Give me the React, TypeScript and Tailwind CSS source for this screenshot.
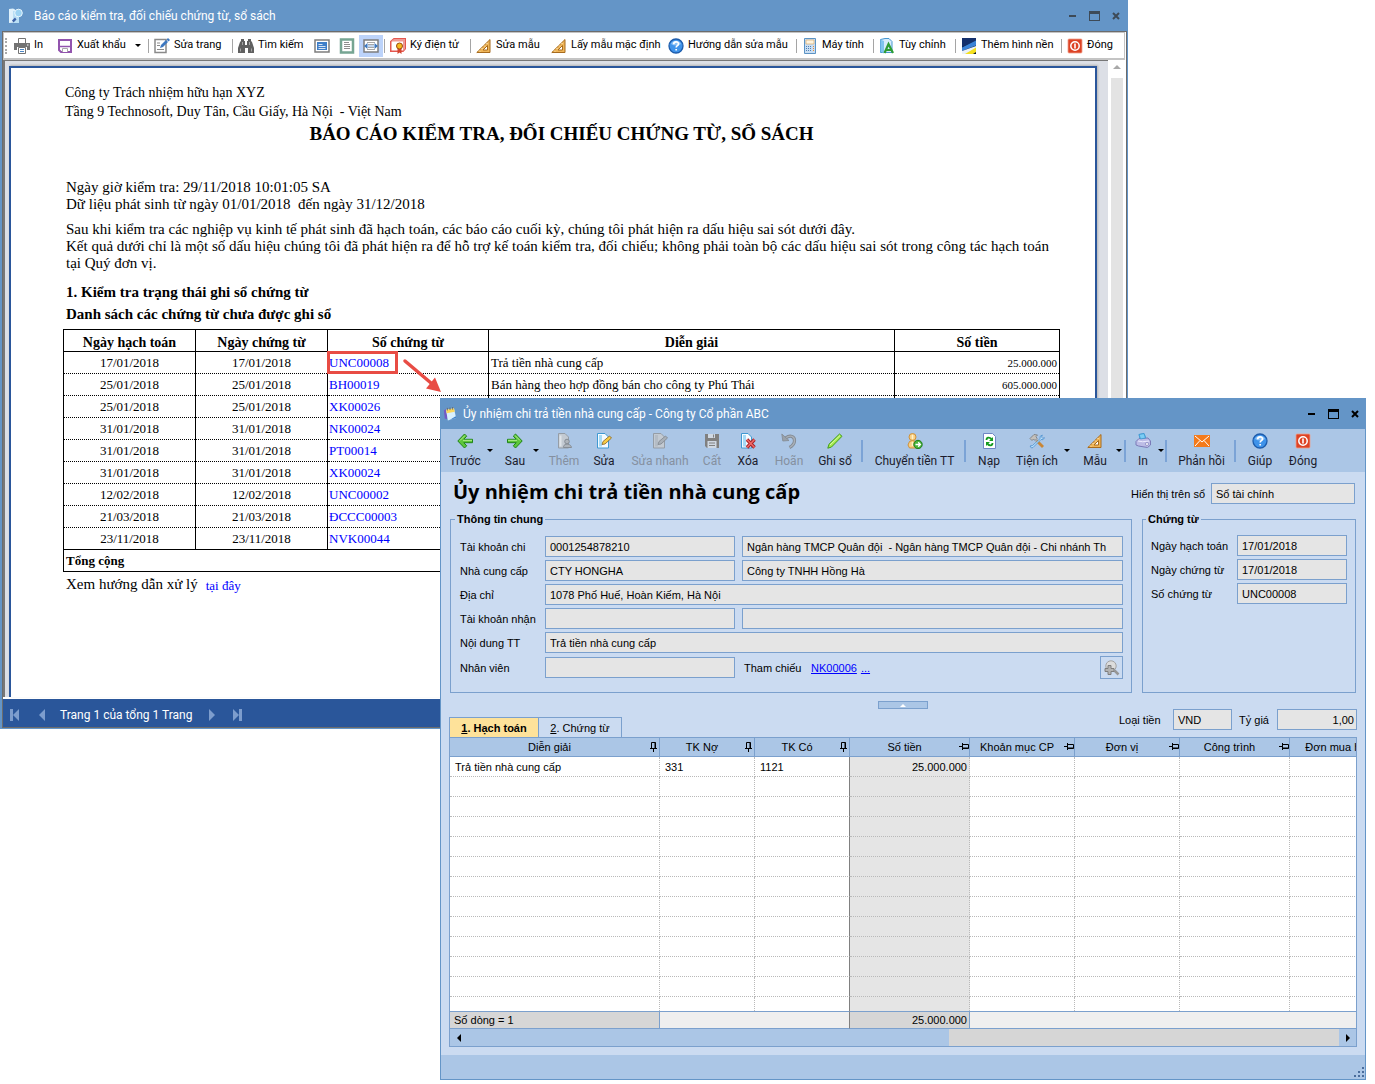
import type {ReactNode} from "react";

type IconProps = {
    children: ReactNode;
    className?: string;
}

function Icon({children, className = "h-4 w-4"}: IconProps) {
    return (
        <svg viewBox="0 0 16 16" className={`shrink-0 ${className}`} fill="none" aria-hidden="true">
            {children}
        </svg>
    )
}

const PrinterIcon = () => (
    <Icon>
        <path d="M4.500 5V.5h7V5" fill="#fff" stroke="#737373" />
        <path d="M0 5h16v7h-3V9H3v3H0z" fill="#737373" />
        <path d="M4.500 9.500h7v6h-7z" fill="#fff" stroke="#737373" />
        <path d="M6 11.500h4M6 13.500h4" stroke="#4a86c5" />
        <path d="M13 7h1.500" stroke="#fff" />
    </Icon>
)

const SaveIcon = () => (
    <Icon>
        <path d="M2 2h12v12H4l-2-2z" fill="#fff" stroke="#9254ae" strokeWidth="2" />
        <path d="M2 8.500h12" stroke="#9254ae" strokeWidth="1.500" />
        <path d="M5.500 14v-3.500h5V14" fill="#fff" stroke="#a9a9a9" />
    </Icon>
)

const EditPageIcon = () => (
    <Icon>
        <path d="M1 1.500h11v13H1z" fill="#fff" stroke="#8a8a8a" strokeWidth="1.500" />
        <path d="M3 5h3M3 7.500h3M3 11.500h7" stroke="#8a8a8a" />
        <path d="M6 10l1-3 5-5 2 2-5 5z" fill="#3d78c0" />
        <path d="M12.500 1.500L14 0l2 2-1.500 1.500z" fill="#3d78c0" />
    </Icon>
)

const BinocularsIcon = () => (
    <Icon>
        <path d="M3 1h3v2h1v4h2V3h1V1h3v2l1 1 2 6v5h-6v-5H7v5H0v-5l2-6 1-1z" fill="#606060" />
        <path d="M2.500 10.500v3M13.500 10.500v3M4.500 4v3M11.500 4v3" stroke="#a5a5a5" />
    </Icon>
)

const WholePageIcon = () => (
    <Icon>
        <path d="M1 2h14v12H1z" fill="#fff" stroke="#7d7d7d" strokeWidth="1.500" />
        <path d="M3 4h10v8H3z" fill="#3f7fc9" />
        <path d="M4.500 6.500h4M4.500 8.500h7M4.500 10.500h7" stroke="#fff" strokeWidth=".8" />
    </Icon>
)

const OnePageIcon = () => (
    <Icon>
        <path d="M2 1.500h12v13H2z" fill="#fff" stroke="#76a593" strokeWidth="2.500" />
        <path d="M5 4.500h5M5 6.500h6M5 8.500h6M5 10.500h6" stroke="#8d8d8d" />
    </Icon>
)

const PageWidthIcon = () => (
    <Icon>
        <path d="M1 2h14v12H1z" fill="#fff" stroke="#7d7d7d" strokeWidth="1.500" />
        <path d="M4 4.500h8M4 11.500h8" stroke="#a8a8a8" />
        <path d="M1 8l3.500-3v6zM15 8l-3.500-3v6z" fill="#3d78c0" />
        <path d="M5 6.500h6M5 9.500h6" stroke="#a8a8a8" />
        <path d="M4 8h8" stroke="#8aaedb" />
    </Icon>
)

const SignIcon = () => (
    <Icon>
        <path d="M.75 3.500L4 .75h11.250v10L13 13.250H.75z" fill="#fff" stroke="#e4574f" strokeWidth="1.500" />
        <path d="M1 3.500L4 1h11v10l-2 2V3.500z" fill="#ef9a94" />
        <path d="M7.500 10h4v6l-2-1.500-2 1.500z" fill="#d4432f" />
        <circle cx="9.500" cy="8" r="3" fill="#f5b91c" stroke="#9a4b12" />
    </Icon>
)

const RulerIcon = () => (
    <Icon>
        <path d="M14 1.500v13H.8z" fill="#efb558" stroke="#a76b1e" />
        <path d="M11.500 7.500v4.500H7z" fill="#fff" stroke="#a76b1e" />
        <path d="M3 12.500l1 1M5.500 10l1 1M8 7.500l1 1M10.500 5l1 1" stroke="#fff3cf" />
    </Icon>
)

const HelpIcon = () => (
    <Icon>
        <circle cx="8" cy="8" r="7" fill="#3f93ea" stroke="#1d5cac" strokeWidth="1.300" />
        <path d="M3 6a5.500 5.500 0 0 1 10 0q-5 3-10 0z" fill="#8cc2f7" />
        <path d="M5.700 6.200c0-3 4.800-3 4.800-.3 0 1.700-2.300 1.700-2.300 3.500M8.200 11v1.600" stroke="#fff" strokeWidth="1.700" />
    </Icon>
)

const CalculatorIcon = () => (
    <Icon>
        <path d="M2.500.5h11v15h-11z" fill="#c9def3" stroke="#5b93c4" />
        <path d="M4 2h8v4H4z" fill="#fff4df" stroke="#d5a96b" strokeWidth=".7" />
        <path d="M4 8.500h6M4 10.500h6M4 12.500h6" stroke="#4e80b5" strokeDasharray="1 1" />
        <path d="M11.500 8v6" stroke="#ef8b2f" strokeDasharray="1 1" />
    </Icon>
)

const CustomizeIcon = () => (
    <Icon>
        <path d="M1.500 1.500L6 .5h4l3 3v11h-11.500z" fill="#d6ebfb" stroke="#4697d0" />
        <path d="M1.500 1.500L5 3v12.500l-3.500-2z" fill="#7fc4ee" />
        <path d="M5.500 15l4-9 4.500 9M7.500 12h5" stroke="#2d9c34" strokeWidth="2.200" />
    </Icon>
)

const WallpaperIcon = () => (
    <Icon>
        <path d="M1 0h14v16H1z" fill="#0c1830" />
        <path d="M1 0h14v3L1 9z" fill="#14306c" />
        <path d="M15 2.500v5L1 13V9.500z" fill="#3b83d8" />
        <path d="M1 13l14-5v3.500L8 16H1z" fill="#e9f1fb" />
        <path d="M15 9.500V14l-3 2H4z" fill="#f4e01f" />
    </Icon>
)

const PowerIcon = () => (
    <Icon>
        <rect x="1" y="1" width="14" height="14" rx="1" fill="#dd4325" stroke="#f0a08c" strokeWidth=".8" />
        <circle cx="8" cy="8" r="4.200" stroke="#fff" strokeWidth="1.500" />
        <path d="M8 5.500v5" stroke="#fff" strokeWidth="1.600" />
    </Icon>
)

const ArrowIcon = ({flip}: {flip?: boolean}) => (
    <Icon className={flip ? "h-4 w-4 -scale-x-100" : "h-4 w-4"}>
        <path d="M7.500 1L.8 8l6.700 7 2.200-2.200L6.800 9.700h8.700V6.300H6.800l2.900-3.100z" fill="#5ec63a" stroke="#1f8418" />
        <path d="M3 7.500l5-5M6 7.300h9" stroke="#b6ee92" />
    </Icon>
)

const AddIcon = () => (
    <Icon>
        <path d="M2.500.5H9l3.500 3.500v11h-10z" fill="#c3cad2" stroke="#959da6" />
        <path d="M4.500 2.500v11" stroke="#dfe4e9" strokeWidth="2" />
        <circle cx="11" cy="8.500" r="2.300" fill="#aeb4bb" stroke="#868d95" />
        <path d="M7.500 14.500c-.5-4.500 7.500-4.500 8 0z" fill="#aeb4bb" stroke="#868d95" />
    </Icon>
)

const EditIcon = ({muted}: {muted?: boolean}) => (
    <Icon>
        <path d="M1.500.5H9l3.500 3.500v11h-11z" fill={muted ? "#c3cad2" : "#f4faff"} stroke={muted ? "#959da6" : "#3f99d2"} />
        <path d="M3 2h3v11.500H3z" fill={muted ? "#b4bcc5" : "#a7dbf6"} />
        <path d="M6 11.500l1-3L13.500 3l2 2L9 11z" fill={muted ? "#a9b0b8" : "#f8cc42"} stroke={muted ? "#848b93" : "#8b6c31"} strokeWidth=".9" />
    </Icon>
)

const FloppyIcon = () => (
    <Icon>
        <path d="M1 1h14v14H3l-2-2z" fill="#808080" />
        <path d="M4 1h7v4H4zM3.500 8h9v7h-9z" fill="#cfd8e3" />
        <path d="M9.500 1.500v3M5 10h6M5 12.500h6" stroke="#808080" />
    </Icon>
)

const DeleteIcon = () => (
    <Icon>
        <path d="M1.500.5H8l3.500 3.500v11h-10z" fill="#f4faff" stroke="#3f99d2" />
        <path d="M3 2h3v11.500H3z" fill="#a7dbf6" />
        <path d="M7 6.500l7.500 8M14.500 6.500l-7.500 8" stroke="#a72125" strokeWidth="3.400" />
        <path d="M7 6.500l7.500 8M14.500 6.500l-7.500 8" stroke="#ef6b69" strokeWidth="1.500" />
    </Icon>
)

const UndoIcon = () => (
    <Icon>
        <path d="M4.500 5c5-3.500 9-1.500 9 2.500 0 3-1.500 5.200-5 7" stroke="#838a92" strokeWidth="3.200" />
        <path d="M4.500 5c5-3.500 9-1.500 9 2.500 0 3-1.500 5.200-5 7" stroke="#a9b0b9" strokeWidth="1.400" />
        <path d="M.8 1l1 7 6.200-.5z" fill="#9aa1aa" stroke="#838a92" strokeWidth=".8" />
    </Icon>
)

const MarkerIcon = () => (
    <Icon>
        <path d="M.8 15.200l1.200-4L12.500 1l2.500 2.300L4.500 14z" fill="#a5ea4c" stroke="#419c1c" />
        <path d="M3 12L13 2.500" stroke="#dbfba9" />
    </Icon>
)

const TransferIcon = () => (
    <Icon>
        <circle cx="5.500" cy="4" r="3.500" fill="#f9d084" stroke="#cf9138" />
        <path d="M2.500 8.500q3-2 6 0l2 3-2 3.500h-6l-1.500-3z" fill="#f9d084" stroke="#cf9138" />
        <path d="M5.500 2v4M5.500 9v4" stroke="#fff1cc" strokeWidth="1.500" />
        <circle cx="11" cy="11.500" r="4.200" fill="#49b53a" stroke="#1d7a1b" />
        <path d="M8.500 11.500h4.500M11.200 9.300l2.200 2.200-2.200 2.200" stroke="#fff" strokeWidth="1.300" />
    </Icon>
)

const ReloadIcon = () => (
    <Icon>
        <path d="M2.500.5h9l3 3v12h-12z" fill="#fff" stroke="#6f86c5" />
        <path d="M12 4v4H8zM5 13V9h4z" fill="#159a1f" />
        <path d="M5.500 7c0-3 3-3 5-1M11.500 10c0 3-3 3-5 1" stroke="#159a1f" strokeWidth="1.800" />
    </Icon>
)

const ToolsIcon = () => (
    <Icon>
        <path d="M7.500 7.500l6.500 6.500" stroke="#c98636" strokeWidth="2.800" />
        <path d="M1 5.500L5 1.500l3.500.5-1.500 1.500 1 2-2 2-1.500-1.500-1.500 1.500z" fill="#c4c0bb" stroke="#777" strokeWidth=".8" />
        <path d="M1 13l1.500 2 1.500-.5L12 6.500l2 .2 1.500-2-1.800.5-1.200-1 .8-2.200-2.300 1.500.2 2L3.500 12.500z" fill="#b9dffb" stroke="#4d8fcd" strokeWidth=".8" />
    </Icon>
)

const PrintColorIcon = () => (
    <Icon>
        <path d="M4 1.500l5-1 2 5-5.500 2z" fill="#7ccdf4" stroke="#3b96cf" strokeWidth=".8" />
        <path d="M1 8.500l3-3 9-.5 2.500 3v4l-3 2.500-9-1.500L1 12z" fill="#bcbce6" stroke="#7b7bb8" />
        <path d="M3 8q4 1.500 11 0" stroke="#ececff" />
        <path d="M4 1.500l5-1 1.500 4.500-5 1z" fill="#7ccdf4" stroke="#3b96cf" strokeWidth=".8" />
        <circle cx="12" cy="11" r="1.500" fill="#fff" stroke="#7b7bb8" strokeWidth=".7" />
    </Icon>
)

const MailIcon = () => (
    <Icon>
        <path d="M0 2h16v12H0z" fill="#f47a1b" />
        <path d="M1 3l7 6 7-6M1 13l5-5.500M15 13l-5-5.500" stroke="#fff" />
    </Icon>
)

const ZoomIcon = () => (
    <Icon>
        <path d="M10.500 10.500l4 4" stroke="#979797" strokeWidth="2.500" />
        <circle cx="7" cy="6" r="5.200" fill="#dcdcdc" stroke="#a3a3a3" />
        <path d="M4 5.500h3v3h3v3H7v3H4v-3H1v-3h3z" fill="#b3b3b3" stroke="#7e7e7e" />
    </Icon>
)

const ReportIcon = () => (
    <Icon>
        <path d="M1 1l4-.5 2 1v13L1 15z" fill="#dff1fb" />
        <path d="M5 3h6v12H5z" fill="#b9dff5" />
        <circle cx="10.500" cy="5" r="3.800" fill="#9dd3f2" stroke="#e8f6fd" />
        <path d="M4 12.500l3-3 1.500 2-3 3z" fill="#3e63a8" />
    </Icon>
)

const VoucherIcon = () => (
    <Icon className="h-[14px] w-[14px]">
        <path d="M1 4l3-2 1 12-3-1z" fill="#7259c5" />
        <path d="M3.500 3l9-1.500 2.500 11-9.500 3z" fill="#d9f0fd" />
        <path d="M3.500 3l9-1.500 1 4-9.300 1.500z" fill="#fbd75c" />
        <path d="M5 1v3M8 .5v3M11 0v3" stroke="#666" />
        <path d="M8 14.500l6.500-4 .5 2-9.500 3z" fill="#3c7fcb" />
    </Icon>
)

function WindowButtons({tone}: {tone: string}) {
    return (
        <div className={`flex items-center gap-3 ${tone}`}>
            <button type="button" aria-label="Thu nhỏ" className="flex h-3 w-2 items-center">
                <span className="h-[2px] w-[7px] bg-current" />
            </button>
            <button type="button" aria-label="Phóng to" className="h-[10px] w-[11px] border border-t-[3px] border-current" />
            <button type="button" aria-label="Đóng cửa sổ" className="flex w-2 justify-center">
                <svg viewBox="0 0 8 8" className="h-2 w-2 shrink-0"><path d="M1 1l6 6M7 1L1 7" stroke="currentColor" strokeWidth="2" /></svg>
            </button>
        </div>
    )
}

type ReportTool = {
    icon: ReactNode;
    label: string;
    width: string;
    menu?: boolean;
    iconOnly?: boolean;
    active?: boolean;
    endsGroup?: boolean;
}

const reportTools: ReportTool[] = [
    {icon: <PrinterIcon />, label: "In", width: "w-[43px]"},
    {icon: <SaveIcon />, label: "Xuất khẩu", width: "w-[90px]", menu: true, endsGroup: true},
    {icon: <EditPageIcon />, label: "Sửa trang", width: "w-[77px]", endsGroup: true},
    {icon: <BinocularsIcon />, label: "Tìm kiếm", width: "w-[71px]"},
    {icon: <WholePageIcon />, label: "Cả trang", width: "w-[25px]", iconOnly: true},
    {icon: <OnePageIcon />, label: "Một trang", width: "w-[25px]", iconOnly: true},
    {icon: <PageWidthIcon />, label: "Vừa chiều rộng", width: "w-[24px]", iconOnly: true, active: true, endsGroup: true},
    {icon: <SignIcon />, label: "Ký điện tử", width: "w-[79px]", endsGroup: true},
    {icon: <RulerIcon />, label: "Sửa mẫu", width: "w-[75px]"},
    {icon: <RulerIcon />, label: "Lấy mẫu mặc định", width: "w-[117px]"},
    {icon: <HelpIcon />, label: "Hướng dẫn sửa mẫu", width: "w-[127px]", endsGroup: true},
    {icon: <CalculatorIcon />, label: "Máy tính", width: "w-[70px]", endsGroup: true},
    {icon: <CustomizeIcon />, label: "Tùy chỉnh", width: "w-[75px]", endsGroup: true},
    {icon: <WallpaperIcon />, label: "Thêm hình nền", width: "w-[99px]", endsGroup: true},
    {icon: <PowerIcon />, label: "Đóng", width: "w-[50px]"},
]

function ReportToolbar() {
    return (
        <div className="flex h-[28px] items-center border border-[#c4c4c4] border-b-2 bg-white font-['Roboto',sans-serif] text-[11px] text-black">
            <span className="ml-px mr-[7px] h-4 border-l-2 border-dotted border-[#a9a9a9]" />
            {reportTools.map((tool) => (
                <div key={tool.label} className="flex items-center">
                    <button
                        type="button"
                        aria-label={tool.label}
                        className={`flex h-[22px] items-center gap-1 whitespace-nowrap ${tool.width} ${tool.iconOnly ? "justify-center" : ""} ${tool.active ? "bg-[#bcd3fa]" : ""}`}
                    >
                        {tool.icon}
                        {!tool.iconOnly && tool.label}
                        {tool.menu && <span className="ml-auto mr-[6px] border-x-[3px] border-t-[3px] border-x-transparent border-t-black" />}
                    </button>
                    {tool.endsGroup && <span className="mr-[5px] ml-px h-[14px] w-px bg-[#a5a5a5]" />}
                </div>
            ))}
        </div>
    )
}

type ReportRow = {
    posted: string;
    dated: string;
    code: string;
    note?: string;
    amount?: string;
}

const reportRows: ReportRow[] = [
    {posted: "17/01/2018", dated: "17/01/2018", code: "UNC00008", note: "Trả tiền nhà cung cấp", amount: "25.000.000"},
    {posted: "25/01/2018", dated: "25/01/2018", code: "BH00019", note: "Bán hàng theo hợp đồng bán cho công ty Phú Thái", amount: "605.000.000"},
    {posted: "25/01/2018", dated: "25/01/2018", code: "XK00026"},
    {posted: "31/01/2018", dated: "31/01/2018", code: "NK00024"},
    {posted: "31/01/2018", dated: "31/01/2018", code: "PT00014"},
    {posted: "31/01/2018", dated: "31/01/2018", code: "XK00024"},
    {posted: "12/02/2018", dated: "12/02/2018", code: "UNC00002"},
    {posted: "21/03/2018", dated: "21/03/2018", code: "ĐCCC00003"},
    {posted: "23/11/2018", dated: "23/11/2018", code: "NVK00044"},
]

function ReportTable() {
    return (
        <table className="mt-1 w-full table-fixed border-collapse border border-black text-[13px] leading-[18px]">
            <colgroup>
                <col className="w-[132px]" />
                <col className="w-[132px]" />
                <col className="w-[161px]" />
                <col />
                <col className="w-[165px]" />
            </colgroup>
            <thead>
                <tr className="h-[22px] text-[14px]">
                    {["Ngày hạch toán", "Ngày chứng từ", "Số chứng từ", "Diễn giải", "Số tiền"].map((title) => (
                        <th key={title} className="border border-black p-0 pt-1 leading-[17px]">{title}</th>
                    ))}
                </tr>
            </thead>
            <tbody>
                {reportRows.map((row, index) => (
                    <tr key={row.code} className="h-[22px] border-b border-dotted border-black">
                        <td className="border-x border-x-black p-0 text-center">{row.posted}</td>
                        <td className="border-x border-x-black p-0 text-center">{row.dated}</td>
                        <td className="relative border-x border-x-black p-0 pl-px">
                            <a href={`#${row.code}`} className="text-[#0000ff]">{row.code}</a>
                            {index === 0 && <CalloutArrow />}
                        </td>
                        <td className="border-x border-x-black p-0 pl-[2px]">{row.note}</td>
                        <td className="border-x border-x-black p-0 pr-[2px] text-right text-[11px]">{row.amount}</td>
                    </tr>
                ))}
            </tbody>
            <tfoot>
                <tr className="h-[22px]">
                    <td colSpan={5} className="border border-black p-0 pl-[2px] font-bold">Tổng cộng</td>
                </tr>
            </tfoot>
        </table>
    )
}

// red frame round the voucher number, with an arrow to the voucher window
function CalloutArrow() {
    return (
        <>
            <span className="absolute -top-px -left-px h-[23px] w-[71px] border-[3px] border-[#e84c44]" />
            <svg viewBox="0 0 40 36" className="absolute top-[6px] left-[74px] h-9 w-10" fill="none" aria-hidden="true">
                <path d="M3 3l26 22" stroke="#e84c44" strokeWidth="3.500" strokeLinecap="round" />
                <path d="M39 34l-15-3.500 9-11z" fill="#e84c44" />
            </svg>
        </>
    )
}

function ReportPage() {
    return (
        <article className="min-w-0 flex-1 border-x-2 border-t-2 border-[#2a569b] bg-white pt-[15px] pr-[35px] pb-[102px] pl-[52px] font-['Liberation_Serif',serif] text-black shadow-[1px_-1px_2px_#b5b5b5]">
            <p className="pl-[2px] text-[14px] leading-[19px]">Công ty Trách nhiệm hữu hạn XYZ</p>
            <p className="pl-[2px] text-[14px] leading-[19px]">Tầng 9 Technosoft, Duy Tân, Cầu Giấy, Hà Nội&nbsp; - Việt Nam</p>
            <h1 className="mt-px text-center text-[19px] leading-6 font-bold">BÁO CÁO KIỂM TRA, ĐỐI CHIẾU CHỨNG TỪ, SỔ SÁCH</h1>
            <p className="mt-[33px] pl-[3px] text-[15px] leading-[17px]">
                Ngày giờ kiểm tra: 29/11/2018 10:01:05 SA<br />
                Dữ liệu phát sinh từ ngày 01/01/2018&nbsp; đến ngày 31/12/2018
            </p>
            <p className="mt-2 pl-[3px] text-[15px] leading-[17px]">
                Sau khi kiểm tra các nghiệp vụ kinh tế phát sinh đã hạch toán, các báo cáo cuối kỳ, chúng tôi phát hiện ra dấu hiệu sai sót dưới đây.<br />
                Kết quả dưới chỉ là một số dấu hiệu chúng tôi đã phát hiện ra để hỗ trợ kế toán kiểm tra, đối chiếu; không phải toàn bộ các dấu hiệu sai sót trong công tác hạch toán<br />
                tại Quý đơn vị.
            </p>
            <h2 className="mt-[9px] pl-[3px] text-[15px] leading-[22px] font-bold">1. Kiểm tra trạng thái ghi sổ chứng từ</h2>
            <h3 className="pl-[3px] text-[15px] leading-[22px] font-bold">Danh sách các chứng từ chưa được ghi sổ</h3>
            <ReportTable />
            <p className="mt-px flex items-center gap-2 pl-[3px] text-[15px] leading-[22px]">
                Xem hướng dẫn xử lý
                <a href="#huong-dan" className="pt-1 text-[13px] leading-[18px] text-[#0000ff]">tại đây</a>
            </p>
        </article>
    )
}

function PagerArrow({label, flip, bar}: {label: string, flip?: boolean, bar?: boolean}) {
    return (
        <button type="button" aria-label={label}>
            <svg viewBox="0 0 10 12" className={flip ? "h-3 w-[10px] -scale-x-100" : "h-3 w-[10px]"} fill="#7d9dcd">
                <path d="M9 0v12L3 6z" />
                {bar && <path d="M0 0h3v12H0z" />}
            </svg>
        </button>
    )
}

function ReportWindow() {
    return (
        <section className="mr-[247px] border-r border-b border-l-2 border-[#6495c7] bg-[#6495c7]">
            <header className="flex h-[31px] items-center justify-between pr-[7px] pl-[6px] font-['Roboto',sans-serif] text-[12px] text-white">
                <span className="flex items-center gap-[10px]"><ReportIcon />Báo cáo kiểm tra, đối chiếu chứng từ, sổ sách</span>
                <WindowButtons tone="text-[#3d4a57]" />
            </header>
            <div className="border border-[#6c6c6c] bg-white">
                <div className="pr-px">
                    <ReportToolbar />
                </div>
                <div className="flex">
                    <div className="flex min-w-0 flex-1 border-t border-l-2 border-[#777] bg-[#dcdfe6] pt-[5px] pr-[11px] pl-1">
                        <ReportPage />
                    </div>
                    <div className="flex w-[18px] flex-col items-center pt-[5px]">
                        <span className="border-x-[4px] border-b-[4px] border-x-transparent border-b-[#a9a9a9]" />
                        <span className="mt-[9px] w-3 flex-1 bg-[#e3e3e3]" />
                    </div>
                </div>
                <footer className="mt-[2px] flex h-[28px] items-center bg-[#2a569a] pt-1 pl-[7px] font-['Roboto',sans-serif] text-[12px] text-white">
                    <div className="flex items-center gap-4"><PagerArrow label="Trang đầu" bar /><PagerArrow label="Trang trước" /></div>
                    <span className="mr-4 ml-[14px]">Trang 1 của tổng 1 Trang</span>
                    <div className="flex items-center gap-[14px]"><PagerArrow label="Trang sau" flip /><PagerArrow label="Trang cuối" flip bar /></div>
                </footer>
            </div>
        </section>
    )
}

type VoucherTool = {
    icon: ReactNode;
    label: string;
    width: string;
    menu?: string;
    disabled?: boolean;
    endsGroup?: boolean;
}

const voucherTools: VoucherTool[] = [
    {icon: <ArrowIcon />, label: "Trước", width: "w-[44px]", menu: "w-[10px]"},
    {icon: <ArrowIcon flip />, label: "Sau", width: "w-[36px]", menu: "w-[10px]"},
    {icon: <AddIcon />, label: "Thêm", width: "w-[42px]", disabled: true},
    {icon: <EditIcon />, label: "Sửa", width: "w-[38px]"},
    {icon: <EditIcon muted />, label: "Sửa nhanh", width: "w-[74px]", disabled: true},
    {icon: <FloppyIcon />, label: "Cất", width: "w-[30px]", disabled: true},
    {icon: <DeleteIcon />, label: "Xóa", width: "w-[42px]"},
    {icon: <UndoIcon />, label: "Hoãn", width: "w-[40px]", disabled: true},
    {icon: <MarkerIcon />, label: "Ghi sổ", width: "w-[52px]", endsGroup: true},
    {icon: <TransferIcon />, label: "Chuyển tiền TT", width: "w-[99px]", endsGroup: true},
    {icon: <ReloadIcon />, label: "Nạp", width: "w-[42px]"},
    {icon: <ToolsIcon />, label: "Tiện ích", width: "w-[54px]", menu: "w-[10px]"},
    {icon: <RulerIcon />, label: "Mẫu", width: "w-[42px]", menu: "w-[8px]", endsGroup: true},
    {icon: <PrintColorIcon />, label: "In", width: "w-[30px]", menu: "w-[7px]", endsGroup: true},
    {icon: <MailIcon />, label: "Phản hồi", width: "w-[65px]", endsGroup: true},
    {icon: <HelpIcon />, label: "Giúp", width: "w-[44px]"},
    {icon: <PowerIcon />, label: "Đóng", width: "w-[42px]"},
]

function VoucherToolbar() {
    return (
        <div className="flex h-[43px] items-center bg-[#abc6e6] pl-[2px] font-['Roboto',sans-serif] text-[12px] leading-4">
            {voucherTools.map((tool) => (
                <div key={tool.label} className="flex items-center">
                    <button
                        type="button"
                        disabled={tool.disabled}
                        className={`flex flex-col items-center gap-1 whitespace-nowrap ${tool.width} ${tool.disabled ? "text-[#8590a0]" : "text-[#1c1c2c]"}`}
                    >
                        {tool.icon}
                        {tool.label}
                    </button>
                    {tool.menu && (
                        <span className={tool.menu}>
                            <span className="block w-0 border-x-[3px] border-t-[3px] border-x-transparent border-t-black" />
                        </span>
                    )}
                    {tool.endsGroup && <span className="mr-[2px] h-[22px] w-[2px] bg-[#7ba3d6]" />}
                </div>
            ))}
        </div>
    )
}

type FieldProps = {
    id: string;
    value?: string;
    className?: string;
    label?: string;
}

function Field({id, value = "", className = "", label}: FieldProps) {
    return (
        <input
            id={id}
            aria-label={label}
            defaultValue={value}
            readOnly
            className={`h-[21px] border border-[#7ba0cd] bg-[#e5e5e5] px-1 ${className}`}
        />
    )
}

const wideRows = [
    {id: "tai-khoan-chi", label: "Tài khoản chi", value: "0001254878210", extra: "Ngân hàng TMCP Quân đội  - Ngân hàng TMCP Quân đội - Chi nhánh Th"},
    {id: "nha-cung-cap", label: "Nhà cung cấp", value: "CTY HONGHA", extra: "Công ty TNHH Hồng Hà"},
    {id: "dia-chi", label: "Địa chỉ", value: "1078 Phố Huế, Hoàn Kiếm, Hà Nội"},
    {id: "tai-khoan-nhan", label: "Tài khoản nhận", value: "", extra: ""},
    {id: "noi-dung", label: "Nội dung TT", value: "Trả tiền nhà cung cấp"},
]

const voucherFields = [
    {id: "ngay-hach-toan", label: "Ngày hạch toán", value: "17/01/2018"},
    {id: "ngay-chung-tu", label: "Ngày chứng từ", value: "17/01/2018"},
    {id: "so-chung-tu", label: "Số chứng từ", value: "UNC00008"},
]

function VoucherForm() {
    return (
        <div className="flex gap-[10px] px-px">
            <fieldset className="min-w-0 flex-1 border border-[#7ba0cd] pt-[9px] pr-2 pb-[13px] pl-[9px]">
                <legend className="-ml-[5px] px-[2px] leading-4 font-bold">Thông tin chung</legend>
                <div className="flex flex-col gap-[3px]">
                    {wideRows.map((row) => (
                        <div key={row.id} className="flex items-center">
                            <label htmlFor={row.id} className="w-[85px]">{row.label}</label>
                            {row.extra === undefined ? (
                                <Field id={row.id} value={row.value} className="min-w-0 flex-1" />
                            ) : (
                                <>
                                    <Field id={row.id} value={row.value} className="w-[190px]" />
                                    <Field id={`${row.id}-ten`} label={`Tên ${row.label}`} value={row.extra} className="ml-[7px] min-w-0 flex-1" />
                                </>
                            )}
                        </div>
                    ))}
                    <div className="flex h-[23px] items-center">
                        <label htmlFor="nhan-vien" className="w-[85px]">Nhân viên</label>
                        <Field id="nhan-vien" className="w-[190px]" />
                        <span className="ml-[9px] w-[67px]">Tham chiếu</span>
                        <a href="#NK00006" className="text-[#0000ff] underline">NK00006</a>
                        <a href="#tham-chieu" className="ml-1 text-[#0000ff] underline">...</a>
                        <button type="button" aria-label="Tìm tham chiếu" className="ml-auto flex h-[23px] w-[23px] items-center justify-center border border-[#7ba0cd]">
                            <ZoomIcon />
                        </button>
                    </div>
                </div>
            </fieldset>
            <fieldset className="w-[214px] min-w-0 shrink-0 border border-[#7ba0cd] pt-2 pr-2 pl-2">
                <legend className="-ml-[5px] px-[2px] leading-4 font-bold">Chứng từ</legend>
                <div className="flex flex-col gap-[3px]">
                    {voucherFields.map((field) => (
                        <div key={field.id} className="flex items-center">
                            <label htmlFor={field.id} className="w-[86px] shrink-0">{field.label}</label>
                            <Field id={field.id} value={field.value} className="min-w-0 flex-1" />
                        </div>
                    ))}
                </div>
            </fieldset>
        </div>
    )
}

function PinIcon({side}: {side?: boolean}) {
    return (
        <svg viewBox="0 0 10 10" className={side ? "h-[10px] w-[10px] shrink-0 rotate-90" : "h-[10px] w-[10px] shrink-0"} fill="none" aria-hidden="true">
            <path d="M2.500 6V.5h4V6M6 .5V6M1 6.500h7M4.500 6.500V10" stroke="#000" />
        </svg>
    )
}

const gridColumns = [
    {title: "Diễn giải", width: "w-[210px]", pin: "up"},
    {title: "TK Nợ", width: "w-[95px]", pin: "up"},
    {title: "TK Có", width: "w-[95px]", pin: "up"},
    {title: "Số tiền", width: "w-[120px]", pin: "side"},
    {title: "Khoản mục CP", width: "w-[105px]", pin: "side"},
    {title: "Đơn vị", width: "w-[105px]", pin: "side"},
    {title: "Công trình", width: "w-[110px]", pin: "side"},
    {title: "Đơn mua hàng", width: "w-[115px]", pin: "side"},
]

const firstRow = ["Trả tiền nhà cung cấp", "331", "1121", "25.000.000", "", "", "", ""]

const gridRows = [firstRow, ...Array.from({length: 11}, () => firstRow.map(() => ""))]

function cellStyle(index: number) {
    if (index === 2) return "border-r border-b border-dotted border-b-[#b9b9b9] border-r-[#808080] [border-right-style:solid]"
    if (index === 3) return "border-r border-b border-dotted border-[#b9b9b9] bg-[#e5e5e5] text-right"
    return "border-r border-b border-dotted border-[#b9b9b9]"
}

function VoucherGrid() {
    return (
        <div className="border border-[#7ba0cd] bg-white">
            <div className="overflow-hidden">
                <table className="w-[955px] table-fixed border-separate border-spacing-0">
                    <colgroup>
                        {gridColumns.map((column) => <col key={column.title} className={column.width} />)}
                    </colgroup>
                    <thead>
                        <tr className="h-[19px] bg-[#abc6e6]">
                            {gridColumns.map((column) => (
                                <th key={column.title} className="border-r border-b border-[#7ba0cd] p-0 font-normal">
                                    <span className="flex items-center">
                                        <span className="flex-1 overflow-hidden text-center whitespace-nowrap">{column.title}</span>
                                        <PinIcon side={column.pin === "side"} />
                                    </span>
                                </th>
                            ))}
                        </tr>
                    </thead>
                    <tbody>
                        {gridRows.map((row, rowIndex) => (
                            <tr key={rowIndex} className="h-5">
                                {row.map((value, index) => (
                                    <td key={index} className={`p-0 ${index === 3 ? "pr-[2px]" : "pl-[5px]"} ${cellStyle(index)}`}>{value}</td>
                                ))}
                            </tr>
                        ))}
                        <tr className="h-[14px]">
                            {firstRow.map((_, index) => <td key={index} className={`border-b-0! p-0 ${cellStyle(index)}`} />)}
                        </tr>
                    </tbody>
                    <tfoot>
                        <tr className="h-[18px] bg-[#efefef] leading-4">
                            <td className="border-y border-r border-[#7ba0cd] bg-[#d6d6d6] p-0 pl-1">Số dòng = 1</td>
                            <td colSpan={2} className="border-y border-r border-y-[#7ba0cd] border-r-[#808080] p-0" />
                            <td className="border-y border-r border-[#7ba0cd] bg-[#d6d6d6] p-0 pr-[2px] text-right">25.000.000</td>
                            <td colSpan={4} className="border-y border-[#7ba0cd] p-0" />
                        </tr>
                    </tfoot>
                </table>
            </div>
            <div className="flex h-[17px] items-center bg-[#abc6e6]">
                <button type="button" aria-label="Cuộn trái" className="flex w-[17px] justify-center">
                    <span className="border-y-[4px] border-r-[4px] border-y-transparent border-r-black" />
                </button>
                <span className="w-[482px]" />
                <span className="h-full flex-1 bg-[#d6d6d6]" />
                <button type="button" aria-label="Cuộn phải" className="flex w-[17px] justify-center">
                    <span className="border-y-[4px] border-l-[4px] border-y-transparent border-l-black" />
                </button>
            </div>
        </div>
    )
}

function VoucherWindow() {
    return (
        <section className="absolute top-[398px] right-[9px] left-[440px] border-x border-b border-[#6495c7] bg-[#cbdbf1]">
            <header className="flex h-[31px] items-center justify-between bg-[#6495c7] pr-[6px] pl-[2px] font-['Roboto',sans-serif] text-[12px] text-white">
                <span className="flex items-center gap-[6px]"><VoucherIcon />Ủy nhiệm chi trả tiền nhà cung cấp - Công ty Cổ phần ABC</span>
                <WindowButtons tone="text-black" />
            </header>
            <VoucherToolbar />
            <div className="px-2 pb-2 font-['Liberation_Sans',sans-serif] text-[11px] leading-4 text-black">
                <div className="flex h-[39px] items-center justify-between pr-[2px] pl-1">
                    <h2 className="font-['Open_Sans',sans-serif] text-[20px] font-bold">Ủy nhiệm chi trả tiền nhà cung cấp</h2>
                    <div className="flex items-center gap-[6px] pt-1">
                        <label htmlFor="hien-thi">Hiển thị trên sổ</label>
                        <Field id="hien-thi" value="Sổ tài chính" className="w-[144px]" />
                    </div>
                </div>
                <VoucherForm />
                <button type="button" aria-label="Thu gọn" className="mx-auto mt-2 flex h-2 w-[50px] items-center justify-center border border-[#7ba0cd] bg-[#abc6e6]">
                    <span className="border-x-[3px] border-b-[3px] border-x-transparent border-b-white" />
                </button>
                <div className="flex items-end justify-between">
                    <div role="tablist" className="flex h-5">
                        <button type="button" role="tab" aria-selected="true" className="w-[90px] border border-b-0 border-[#7ba0cd] bg-[#fee29a] font-bold"><u>1</u>. Hạch toán</button>
                        <button type="button" role="tab" aria-selected="false" className="w-[83px] border border-b-0 border-l-0 border-[#7ba0cd]"><u>2</u>. Chứng từ</button>
                    </div>
                    <div className="mb-[7px] flex items-center">
                        <label htmlFor="loai-tien" className="w-[54px]">Loại tiền</label>
                        <Field id="loai-tien" value="VND" className="w-[59px]" />
                        <label htmlFor="ty-gia" className="ml-[7px] w-[38px]">Tỷ giá</label>
                        <Field id="ty-gia" value="1,00" className="w-[80px] pr-[2px] text-right" />
                    </div>
                </div>
                <VoucherGrid />
            </div>
            <footer className="flex h-[24px] items-end justify-end bg-[#abc6e6] pb-px">
                <svg viewBox="0 0 12 12" className="h-3 w-3" fill="#4a6d9c" aria-hidden="true">
                    <path d="M9 1h2v2H9zM9 5h2v2H9zM5 5h2v2H5zM9 9h2v2H9zM5 9h2v2H5zM1 9h2v2H1z" />
                </svg>
            </footer>
        </section>
    )
}

export default function App() {
    return (
        <main className="relative min-h-screen bg-white">
            <ReportWindow />
            <VoucherWindow />
        </main>
    )
}
